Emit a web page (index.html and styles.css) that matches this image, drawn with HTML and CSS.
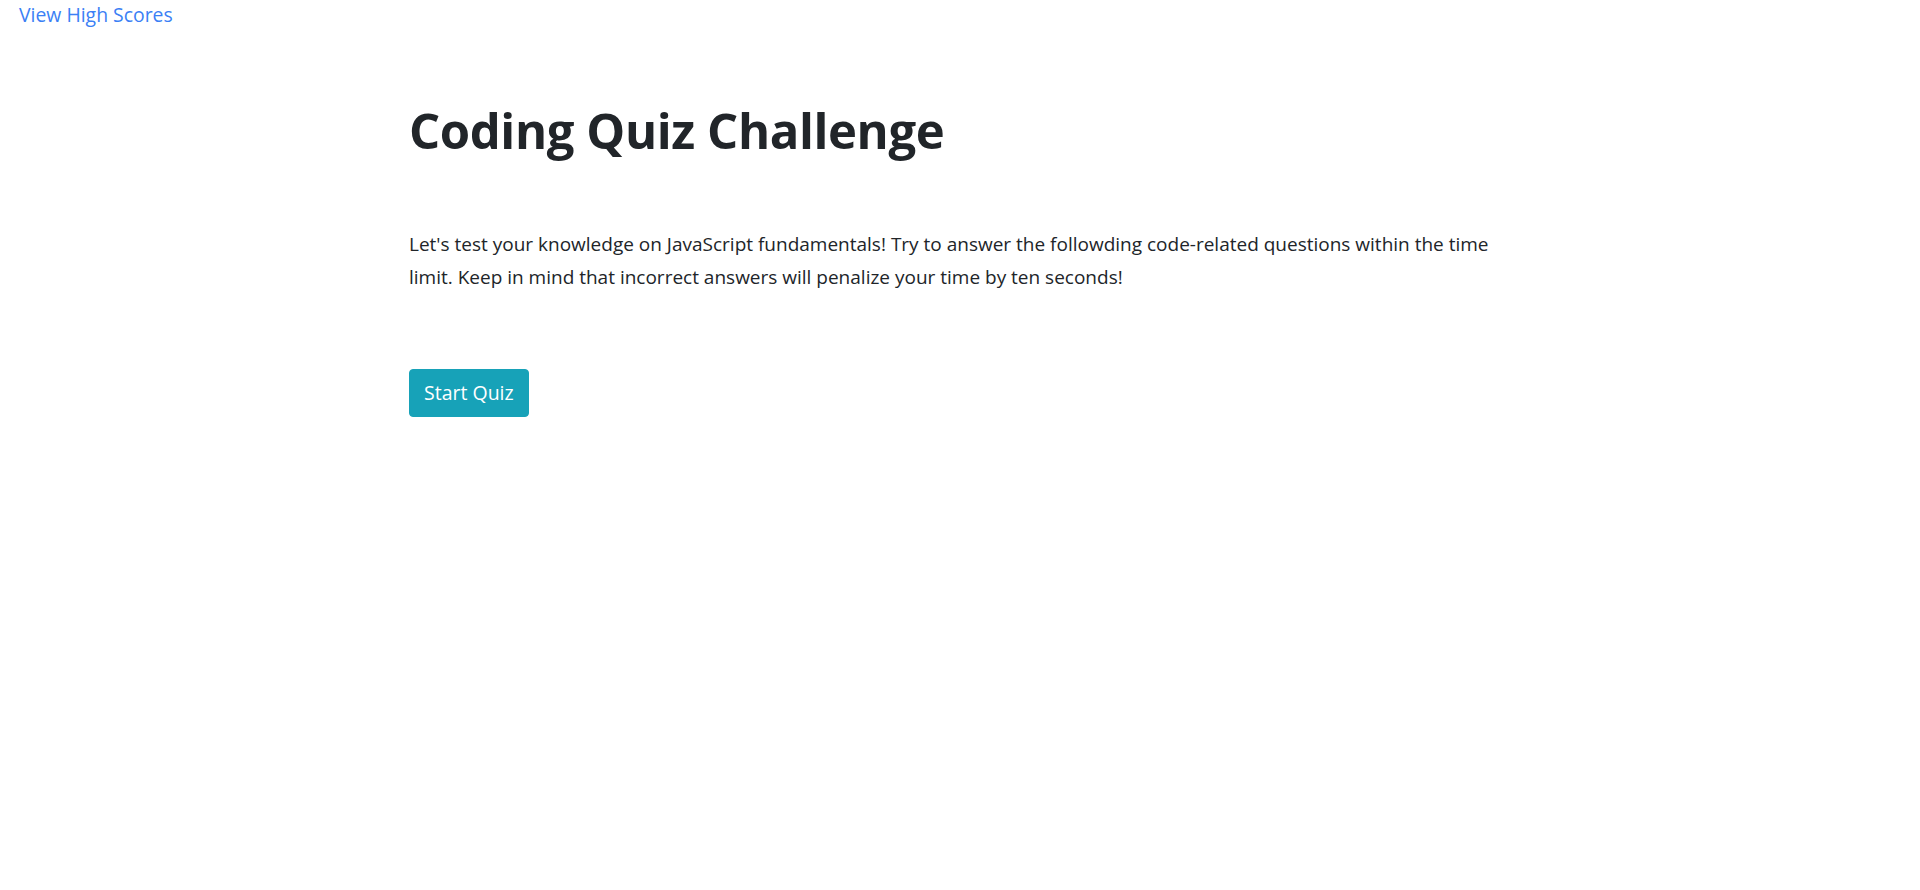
FILE: index.html
```html
<!DOCTYPE html>
<html lang="en">
<head>
<meta charset="utf-8">
<title>Coding Quiz Challenge</title>
<link rel="stylesheet" href="styles.css">
</head>
<body>
<header class="topbar">
  <a class="scores-link" href="#">View High Scores</a>
</header>
<main class="container">
  <h1 class="title">Coding Quiz Challenge</h1>
  <p class="intro">Let's test your knowledge on JavaScript fundamentals! Try to answer the followding code-related questions within the time limit. Keep in mind that incorrect answers will penalize your time by ten seconds!</p>
  <button class="start-btn" type="button">Start Quiz</button>
</main>
</body>
</html>
```

FILE: styles.css
```css
html, body {
  margin: 0;
  padding: 0;
  background: #fff;
}
body {
  font-family: "Open Sans", "Noto Sans", sans-serif;
  color: #212529;
  font-size: 19px;
  line-height: 1.5;
}
.topbar {
  padding-left: 19px;
  height: 30px;
}
.scores-link {
  color: #3b7ff5;
  text-decoration: none;
  font-size: 19.4px;
  line-height: 30px;
}
.container {
  max-width: 1102px;
  margin: 0 auto;
  padding: 0 4px;
}
.title {
  margin: 71px 0 0;
  font-size: 49px;
  font-weight: 700;
  line-height: 59px;
  letter-spacing: -0.4px;
}
.intro {
  margin: 68px 0 0;
  font-size: 19px;
  line-height: 33px;
}
.start-btn {
  margin-top: 75px;
  font-family: inherit;
  font-size: 19.5px;
  line-height: 30px;
  color: #fff;
  background: #17a2b8;
  border: 1px solid #17a2b8;
  border-radius: 4px;
  padding: 8px 14px;
  cursor: pointer;
}
```
